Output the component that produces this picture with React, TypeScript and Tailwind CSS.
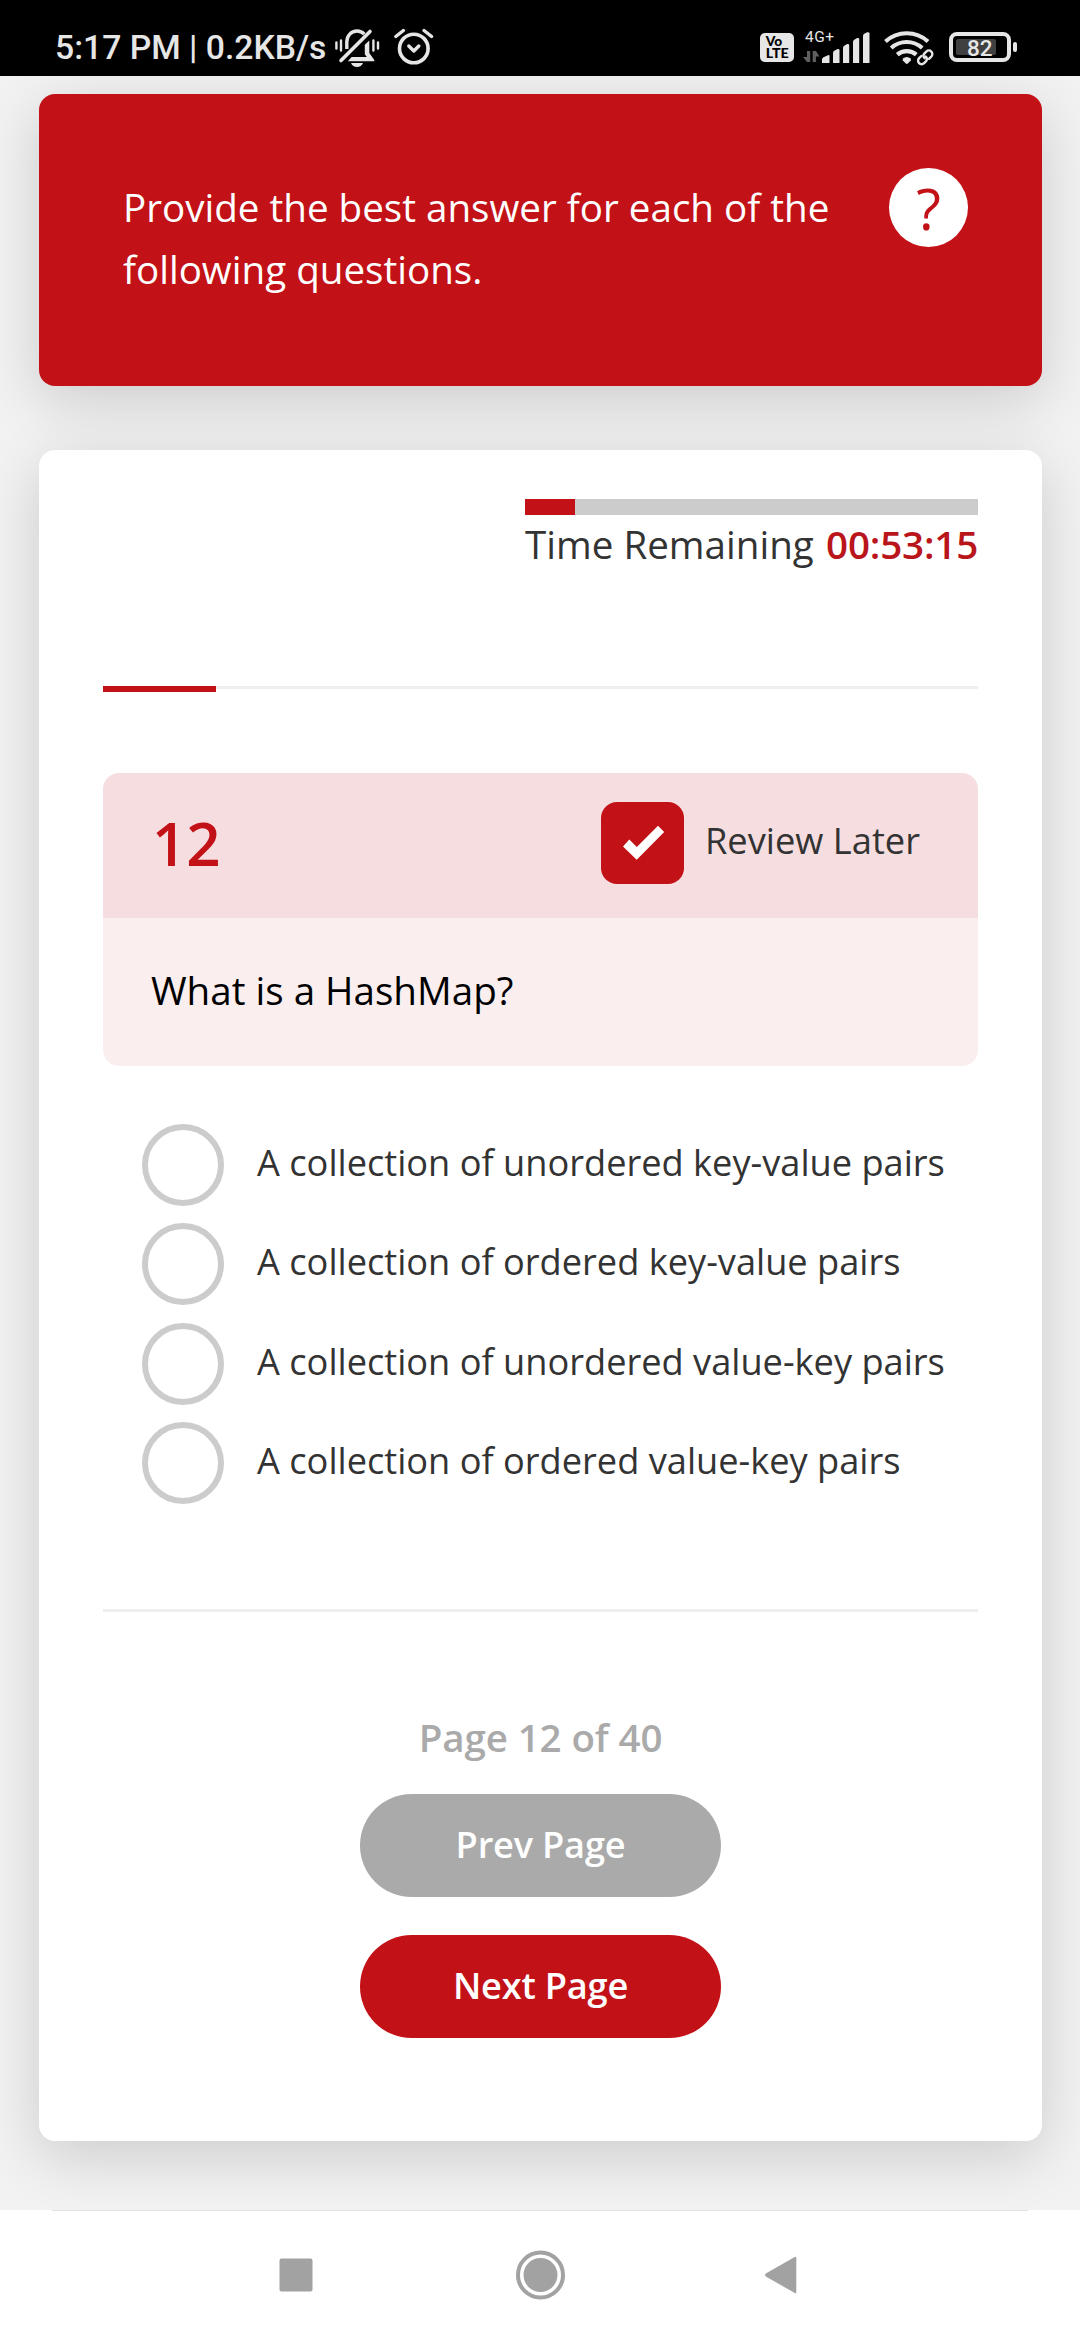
import React from "react";

const INK = "#e6e6e6";

function SilentBell() {
  return (
    <svg className="ml-[10px] mt-[28px] shrink-0" width="46" height="40" viewBox="335 28 46 40" fill="none">
      <g stroke={INK} strokeWidth="2.4" strokeLinecap="round">
        <path d="M336.4 42.5v6M341 40.5v10M378 42.5v6M373.4 40.5v10" />
      </g>
      <path d="M346.8 49V42c0-6.500 4.500-11 10.200-11 3 0 5.500 1.200 7.300 3.100" stroke={INK} strokeWidth="3.400" />
      <path d="M341 60.500L370 31.500" stroke={INK} strokeWidth="3.600" strokeLinecap="round" />
      <path d="M369.300 40.500v12.500l5 7v1.200h-26.500l3.800-4.200h15.200l-2-2.800v-9.500z" fill={INK} />
      <path d="M351 63h12c-1 2.500-3.300 4-6 4s-5-1.500-6-4z" fill={INK} />
    </svg>
  );
}

function Alarm() {
  return (
    <svg className="ml-[12px] mt-[28px] shrink-0" width="42" height="40" viewBox="393 28 42 40" fill="none" stroke={INK} strokeLinecap="round" strokeLinejoin="round">
      <circle cx="413.800" cy="48.500" r="14.300" strokeWidth="3.600" />
      <path d="M408.800 46l5 5 5-5" strokeWidth="3.400" />
      <path d="M395.800 36.500l7.600-6M431.600 36.500l-7.600-6" strokeWidth="3.400" />
    </svg>
  );
}

function VoLte() {
  return (
    <svg className="mt-[33px] shrink-0" width="34" height="29" viewBox="760 33 34 29">
      <rect x="760" y="33" width="34" height="29" rx="5" fill={INK} />
      <g fontFamily="Lato" fontSize="12.500" fontWeight="900">
        <text x="765.700" y="46.300" textLength="16.500" lengthAdjust="spacingAndGlyphs">Vo</text>
        <text x="765.700" y="58.300" textLength="23" lengthAdjust="spacingAndGlyphs">LTE</text>
      </g>
    </svg>
  );
}

function Signal() {
  return (
    <svg className="ml-[9px] mt-[28px] shrink-0" width="68" height="38" viewBox="803 28 68 38" fill={INK}>
      <text x="805" y="42" fontFamily="Roboto" fontSize="15.500" textLength="29">4G+</text>
      <path d="M807 51h3.200v11h-3.200l-4-5h4zM812.700 51h3.200l3.600 5.500h-3.600v5.500h-3.200z" fill="#5f5f5f" />
      <path d="M822 63v-3.500q0-1.500 1.500-2.200l5-2.300q1 0 1 1V63zM833 63V53q0-1.500 1.200-2.200l3.500-1.800q1.800-.3 1.800 1V63zM843 63V48q0-1.500 1.200-2.200l3-1.800q2-.3 2 1V63zM853 63V42q0-1.500 1.200-2.200l3-1.800q2-.3 2 1V63zM863 63V36q0-1.500 1.200-2.200l3-1.500q2.300-.3 2.300 1V63z" />
    </svg>
  );
}

function WifiLink() {
  return (
    <svg className="ml-[12px] mt-[28px] shrink-0" width="52" height="39" viewBox="883 28 52 39" fill="none">
      <g stroke={INK} strokeWidth="4.200">
        <path d="M885.500 41.500a31.500 31.500 0 0 1 42.500 0" />
        <path d="M891.200 48a23 23 0 0 1 31 0" />
        <path d="M897.300 54.700a14.500 14.500 0 0 1 19 0" />
      </g>
      <path d="M902.800 58.500q4-3 8 0v2l-3 3q-1 .9-2 0l-3-3z" fill={INK} />
      <g stroke="#000" strokeWidth="6">
        <rect x="-5.500" y="-3.500" width="11" height="7" rx="3.500" transform="translate(925.500 57.500) rotate(-45)" />
      </g>
      <g stroke={INK} strokeWidth="2.400" strokeLinecap="round">
        <path d="M924.600 58.200a3.500 3.500 0 0 1 -.3-4.600l2-2a3.500 3.500 0 0 1 5 5l-2.300 2.200" />
        <path d="M925.800 56.600a3.500 3.500 0 0 1 .3 4.600l-2 2a3.500 3.500 0 0 1-5-5l2.300-2.200" />
      </g>
    </svg>
  );
}

function Battery() {
  return (
    <svg className="ml-[14px] mt-[31px] shrink-0" width="70" height="32" viewBox="949 31 70 32">
      <rect x="951" y="34" width="58" height="26" rx="6" fill="none" stroke={INK} strokeWidth="4" />
      <rect x="956" y="39" width="40" height="16" rx="2" fill="#404040" />
      <rect x="1013" y="42" width="4" height="10" rx="2" fill={INK} />
      <text x="967" y="55.500" fontFamily="Roboto" fontSize="22.500" fontWeight="500" fill={INK}>82</text>
    </svg>
  );
}

function StatusBar() {
  return (
    <header className="flex h-[76px] shrink-0 items-start bg-black">
      <span className="ml-[55px] mt-[28px] w-[270px] whitespace-nowrap font-['Roboto'] text-[33.700px] font-medium leading-[40px] text-[#e6e6e6]">
        5:17 PM | 0.2KB/s
      </span>
      <SilentBell />
      <Alarm />
      <div className="ml-auto mr-[61px] flex items-start">
        <VoLte />
        <Signal />
        <WifiLink />
        <Battery />
      </div>
    </header>
  );
}

const answers = [
  "A collection of unordered key-value pairs",
  "A collection of ordered key-value pairs",
  "A collection of unordered value-key pairs",
  "A collection of ordered value-key pairs",
];

export default function App() {
  return (
    <div className="flex h-[2340px] w-[1080px] flex-col overflow-hidden bg-white font-['Open_Sans',sans-serif] text-[#333]">
      <StatusBar />

      <main className="flex h-[2134px] shrink-0 flex-col overflow-hidden bg-[#f2f2f2] pl-[39px] pt-[18px]">
        <section className="relative z-10 flex h-[292px] w-[1003px] shrink-0 items-start justify-between rounded-[16px] bg-[#c31217] pl-[84px] pr-[74px] text-white shadow-[0_15px_60px_rgba(0,0,0,0.16)]">
          <p className="mt-[82px] w-[720px] text-[38.600px] leading-[62px]">
            Provide the best answer for each of the following questions.
          </p>
          <span className="mt-[74px] flex size-[79px] items-center justify-center rounded-full bg-white text-[57px] leading-[78px] text-[#c31217]">
            ?
          </span>
        </section>

        <section className="mt-[64px] flex h-[1691px] w-[1003px] shrink-0 flex-col rounded-[16px] bg-white px-[64px] shadow-[0_15px_60px_rgba(0,0,0,0.16)]">
          <div className="mt-[49px] w-[453px] self-end">
            <div className="h-[16px] bg-[#ccc]">
              <div className="h-full w-[50px] bg-[#c31217]" />
            </div>
            <p className="flex justify-between whitespace-nowrap text-[38.600px] leading-[58px]">
              Time Remaining <span className="font-semibold tracking-[-0.2px] text-[#b9151b]">00:53:15</span>
            </p>
          </div>

          <div className="mt-[113px] h-[6px]">
            <div className="h-[3px] bg-[#eee]">
              <div className="h-[6px] w-[113px] bg-[#c31217]" />
            </div>
          </div>

          <div className="mt-[81px] overflow-hidden rounded-[16px]">
            <div className="flex h-[145px] bg-[#f6dee0] pl-[49px]">
              <span className="mt-[29px] text-[60px] font-semibold leading-[82px] text-[#c31217]">12</span>
              <label className="ml-auto mr-[58px] flex">
                <span className="mt-[29px] flex h-[82px] w-[83px] rounded-[16px] bg-[#c31217]">
                  <svg className="ml-[22px] mt-[23px]" width="42" height="36" viewBox="0 0 42 36" fill="#fff">
                    <path d="M0 21.500L6.300 14.500L13.800 22L35 .8L41.200 7L13.700 34.800Z" />
                  </svg>
                </span>
                <span className="ml-[21px] mt-[42px] w-[215px] whitespace-nowrap text-[36.250px] leading-[50px]">Review Later</span>
              </label>
            </div>
            <div className="h-[148px] bg-[#faeeee] pl-[48px] pt-[42px] text-[38.600px] leading-[60px] text-black">
              What is a HashMap?
            </div>
          </div>

          <ul className="ml-[39px] mt-[58px] flex flex-col gap-[17.300px]">
            {answers.map((answer) => (
              <li key={answer} className="flex h-[82px] items-start">
                <span className="size-[82px] shrink-0 rounded-full border-[6px] border-[#ccc]" />
                <span className="ml-[33px] mt-[13px] whitespace-nowrap text-[36.200px] leading-[50px]">{answer}</span>
              </li>
            ))}
          </ul>

          <div className="mt-[105px] h-[3px] shrink-0 bg-[#eee]" />

          <div className="mt-[96px] flex flex-col items-center">
            <p className="text-[38.500px] font-semibold leading-[58px] tracking-[-0.100px] text-[#aaa]">Page 12 of 40</p>
            <button className="mt-[28px] h-[103px] w-[361px] rounded-[52px] bg-[#aaa] pb-[3px] text-[36.200px] font-semibold tracking-[-0.200px] text-white">
              Prev Page
            </button>
            <button className="mt-[38px] h-[103px] w-[361px] rounded-[52px] bg-[#c31217] pb-[3px] text-[36.200px] font-semibold tracking-[-0.200px] text-white">
              Next Page
            </button>
          </div>
        </section>
      </main>

      <nav className="flex flex-1 flex-col">
        <div className="ml-[52px] h-px w-[976px] bg-[#e0e0e0]" />
        <div className="flex h-[128px] items-center pl-[279px]">
          <svg width="34" height="34" viewBox="0 0 34 34" fill="#a2a2a2">
            <rect x=".5" y=".5" width="33" height="33" rx="2" />
          </svg>
          <svg className="ml-[203px]" width="50" height="50" viewBox="0 0 50 50">
            <circle cx="24.500" cy="25" r="22.500" fill="none" stroke="#a2a2a2" strokeWidth="4" />
            <circle cx="24.500" cy="25" r="17" fill="#a2a2a2" />
          </svg>
          <svg className="ml-[198px]" width="34" height="38" viewBox="0 0 34 38" fill="#a2a2a2">
            <path d="M30.300 1.300q2-1.500 2 .7v34q0 2.200-2 .7L1.800 20.600q-1.600-1.600 0-3.200z" />
          </svg>
        </div>
      </nav>
    </div>
  );
}
